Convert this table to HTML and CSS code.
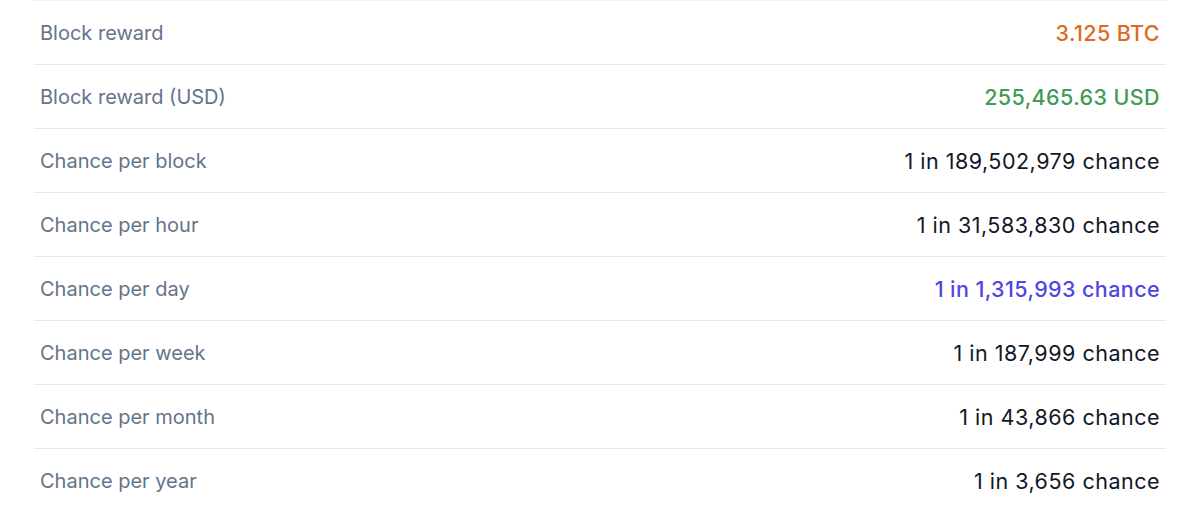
FILE: index.html
```html
<!DOCTYPE html>
<html lang="en">
<head>
    <meta charset="UTF-8">
    <meta name="viewport" content="width=device-width, initial-scale=1.0">
    <title>Solo mining odds</title>
    <link rel="stylesheet" href="styles.css">
</head>
<body>
    <div class="stats">
        <table class="odds">
            <tr>
                <td class="label">Block reward</td>
                <td class="value btc">3.125 BTC</td>
            </tr>
            <tr>
                <td class="label">Block reward (USD)</td>
                <td class="value usd">255,465.63 USD</td>
            </tr>
            <tr>
                <td class="label">Chance per block</td>
                <td class="value">1 in 189,502,979 chance</td>
            </tr>
            <tr>
                <td class="label">Chance per hour</td>
                <td class="value">1 in 31,583,830 chance</td>
            </tr>
            <tr>
                <td class="label">Chance per day</td>
                <td class="value day">1 in 1,315,993 chance</td>
            </tr>
            <tr>
                <td class="label">Chance per week</td>
                <td class="value">1 in 187,999 chance</td>
            </tr>
            <tr>
                <td class="label">Chance per month</td>
                <td class="value">1 in 43,866 chance</td>
            </tr>
            <tr>
                <td class="label">Chance per year</td>
                <td class="value">1 in 3,656 chance</td>
            </tr>
        </table>
    </div>
</body>
</html>
```

FILE: styles.css
```css
body {
    margin: 0;
    background: #fff;
    font-family: Inter, "Noto Sans", sans-serif;
}

.stats {
    padding: 0 33px 0 34px;
}

.odds {
    width: 100%;
    border-collapse: collapse;
}

.odds tr {
    border-top: 1px solid #e5e7eb;
}

.odds tr:first-child {
    border-top: 1px solid #eef0f3;
}

.odds td {
    height: 63px;
    padding: 0 6px;
    font-size: 20px;
    vertical-align: middle;
}

.label {
    color: #64748b;
}

.odds td.value {
    text-align: right;
    font-size: 21.5px;
    font-weight: 400;
    letter-spacing: 0.5px;
    color: #111827;
}

.odds td.btc,
.odds td.usd,
.odds td.day {
    font-weight: 500;
    letter-spacing: 0.4px;
}

.odds td.btc {
    color: #dd6b20;
}

.odds td.usd {
    color: #3f9b55;
}

.odds td.day {
    color: #4f46e5;
}
```
